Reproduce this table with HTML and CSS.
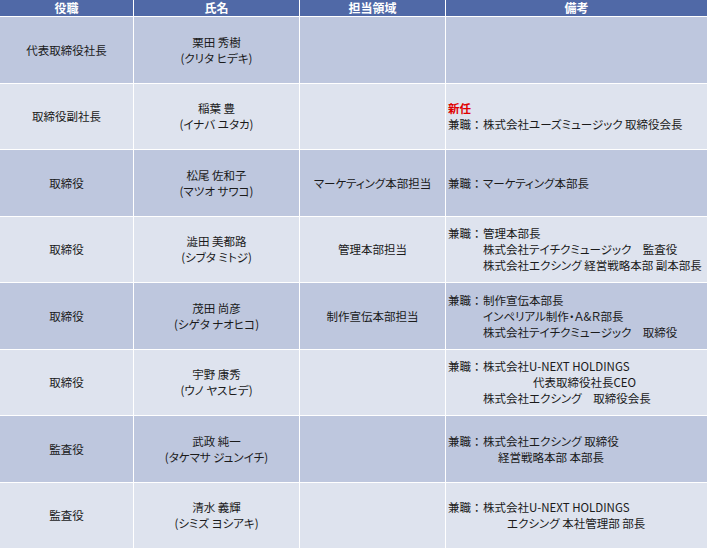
FILE: index.html
```html
<!DOCTYPE html>
<html lang="ja">
<head>
<meta charset="utf-8">
<title>役員一覧</title>
<link rel="stylesheet" href="styles.css">
</head>
<body>
<div class="board">
  <div class="hd">役職</div>
  <div class="hd">氏名</div>
  <div class="hd">担当領域</div>
  <div class="hd">備考</div>

  <div class="c dark">代表取締役社長</div>
  <div class="c dark"><div>栗田 秀樹</div><div>(クリタ ヒデキ)</div></div>
  <div class="c dark"></div>
  <div class="c dark note"></div>

  <div class="c light">取締役副社長</div>
  <div class="c light"><div>稲葉 豊</div><div>(イナバ ユタカ)</div></div>
  <div class="c light"></div>
  <div class="c light note"><div class="new">新任</div><div><span class="lbl">兼職：</span>株式会社ユーズミュージック 取締役会長</div></div>

  <div class="c dark">取締役</div>
  <div class="c dark"><div>松尾 佐和子</div><div>(マツオ サワコ)</div></div>
  <div class="c dark">マーケティング本部担当</div>
  <div class="c dark note"><div><span class="lbl">兼職：</span>マーケティング本部長</div></div>

  <div class="c light">取締役</div>
  <div class="c light"><div>澁田 美都路</div><div>(シブタ ミトジ)</div></div>
  <div class="c light">管理本部担当</div>
  <div class="c light note"><div><span class="lbl">兼職：</span>管理本部長</div><div class="i3">株式会社テイチクミュージック　監査役</div><div class="i3">株式会社エクシング 経営戦略本部 副本部長</div></div>

  <div class="c dark">取締役</div>
  <div class="c dark"><div>茂田 尚彦</div><div>(シゲタ ナオヒコ)</div></div>
  <div class="c dark">制作宣伝本部担当</div>
  <div class="c dark note"><div><span class="lbl">兼職：</span>制作宣伝本部長</div><div class="i3">インペリアル制作・Ａ&amp;Ｒ部長</div><div class="i3">株式会社テイチクミュージック　取締役</div></div>

  <div class="c light">取締役</div>
  <div class="c light"><div>宇野 康秀</div><div>(ウノ ヤスヒデ)</div></div>
  <div class="c light"></div>
  <div class="c light note"><div><span class="lbl">兼職：</span>株式会社U-NEXT HOLDINGS</div><div class="i7">代表取締役社長CEO</div><div class="i3">株式会社エクシング　取締役会長</div></div>

  <div class="c dark">監査役</div>
  <div class="c dark"><div>武政 純一</div><div>(タケマサ ジュンイチ)</div></div>
  <div class="c dark"></div>
  <div class="c dark note"><div><span class="lbl">兼職：</span>株式会社エクシング 取締役</div><div class="i4">経営戦略本部 本部長</div></div>

  <div class="c light">監査役</div>
  <div class="c light"><div>清水 義輝</div><div>(シミズ ヨシアキ)</div></div>
  <div class="c light"></div>
  <div class="c light note"><div><span class="lbl">兼職：</span>株式会社U-NEXT HOLDINGS</div><div class="i5">エクシング 本社管理部 部長</div></div>
</div>
</body>
</html>
```

FILE: styles.css
```css
html, body {
  margin: 0;
  padding: 0;
  background: #ffffff;
}

body {
  width: 709px;
  height: 548px;
  overflow: hidden;
  font-family: "Noto Sans CJK JP", "Noto Sans", sans-serif;
  font-size: 11.5px;
  color: #1a1a1a;
  font-feature-settings: "palt";
}

.board {
  display: grid;
  grid-template-columns: 133px 165px 145px 261px;
  grid-template-rows: 16px repeat(8, 65.5px);
  column-gap: 1px;
  row-gap: 1px;
  width: 707px;
  background: #ffffff;
}

.hd {
  background: #5069a7;
  color: #ffffff;
  font-weight: bold;
  font-size: 12px;
  text-align: center;
  line-height: 16px;
}

.c {
  display: flex;
  flex-direction: column;
  justify-content: center;
  align-items: center;
  text-align: center;
  line-height: 16px;
  white-space: nowrap;
}

.dark {
  background: #bec7de;
}

.light {
  background: #dee3ee;
}

.note {
  align-items: flex-start;
  text-align: left;
  padding-left: 2px;
}

.lbl {
  display: inline-block;
  width: 35px;
  font-feature-settings: normal;
}

.new {
  color: #e00000;
  font-weight: bold;
}

.i3 { padding-left: 35px; }
.i4 { padding-left: 50px; }
.i5 { padding-left: 59px; }
.i7 { padding-left: 85px; }
```
